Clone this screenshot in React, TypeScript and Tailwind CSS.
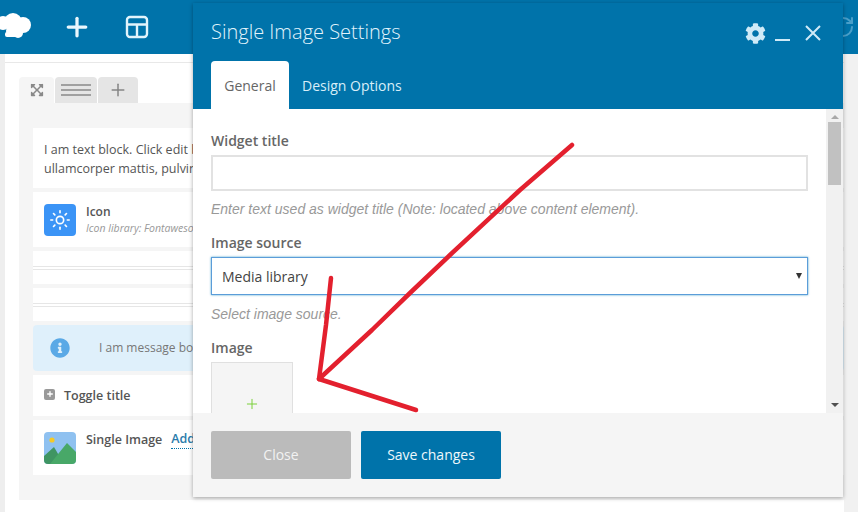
import { Plus, RefreshCw, Sun } from "lucide-react";
import { FaCog, FaExpandArrowsAlt, FaInfoCircle } from "react-icons/fa";

// Top bar logo and layout glyphs
function CloudLogo() {
  return (
    <svg width="34" height="28" viewBox="0 0 34 28" fill="white">
      <circle cx="5" cy="11" r="7" />
      <circle cx="15" cy="10" r="9" />
      <circle cx="25" cy="13" r="8" />
      <circle cx="14" cy="19" r="6" />
      <circle cx="20" cy="21" r="5" />
      <rect x="7" y="20" width="13" height="5" rx="2" />
    </svg>
  );
}

function LayoutGlyph() {
  return (
    <svg width="24" height="24" viewBox="0 0 24 24" fill="none" stroke="#e2f4fc" strokeWidth="2.4">
      <rect x="2" y="2" width="20" height="20" rx="3" />
      <path d="M2 9.5h20M12 9.5V22" />
    </svg>
  );
}

function ImageGlyph() {
  return (
    <svg width="32" height="32" viewBox="0 0 32 32" className="rounded">
      <rect width="32" height="32" fill="#8fc1f0" />
      <circle cx="8" cy="8" r="2.6" fill="#f5c927" />
      <path d="M0 24 10 15 20 32H0Z" fill="#3f9563" />
      <path d="M6 32 23 11 32 20V32Z" fill="#48a868" />
    </svg>
  );
}

function SpacerRow() {
  return (
    <div className="flex flex-col bg-white">
      <div className="h-[15px]" />
      <div className="h-[4px] border-y border-[#e6e6e6]" />
      <div className="h-[14px]" />
    </div>
  );
}

// Text in this column is cut where the dialog starts (x = 193)
function PageBehind() {
  return (
    <div className="flex-1 bg-white pt-2">
      <div className="h-px bg-[#e8e8e8]" />
      <div className="ml-[14px] mt-[14px] text-[#444]">
        <div className="flex h-[26px] gap-px">
          <div className="flex w-[35px] items-center justify-center rounded-t bg-[#f5f5f5] text-[#8a8a8a]">
            <FaExpandArrowsAlt size={14} />
          </div>
          <div className="flex w-[42px] flex-col items-center justify-center gap-[3px] rounded-t bg-[#e5e5e5]">
            <div className="h-[2px] w-[30px] bg-[#a0a0a0]" />
            <div className="h-[2px] w-[30px] bg-[#a0a0a0]" />
            <div className="h-[2px] w-[30px] bg-[#a0a0a0]" />
          </div>
          <div className="flex w-[40px] items-center justify-center rounded-t bg-[#e5e5e5] text-[#858585]">
            <Plus size={20} strokeWidth={1.8} />
          </div>
        </div>
        <div className="flex h-[397px] flex-col gap-1 bg-[#f5f5f5] pl-[14px] pt-[25px]">
          <div className="flex h-[60px] flex-col justify-center whitespace-nowrap bg-white pl-[11px] pt-[2px] text-[12.5px] leading-[19px] text-[#555]">
            <p className="w-[149px] overflow-hidden">I am text block. Click edit button to change this text.</p>
            <p className="w-[149px] overflow-hidden">ullamcorper mattis, pulvinar dapibus leo.</p>
          </div>
          <div className="flex h-[55px] items-center gap-[10px] bg-white pl-[11px]">
            <div className="flex h-8 w-8 items-center justify-center rounded bg-[#3b94f6] text-white">
              <Sun size={22} strokeWidth={1.8} />
            </div>
            <div className="w-[107px] overflow-hidden">
              <p className="text-[12px] font-semibold leading-4 text-[#555]">Icon</p>
              <p className="whitespace-nowrap text-[10.5px] italic leading-4 text-[#999]">Icon library: Fontawesome</p>
            </div>
          </div>
          <SpacerRow />
          <SpacerRow />
          <div className="flex h-[46px] items-center rounded bg-[#dff0fb] pl-[17px]">
            <FaInfoCircle size={20} className="text-[#5aa9e6]" />
            <span className="ml-[29px] w-[94px] overflow-hidden whitespace-nowrap text-[12px] text-[#777]">I am message box. Click edit</span>
          </div>
          <div className="flex h-[41px] items-center bg-white pl-[11px]">
            <div className="mb-[3px] flex h-[11px] w-[11px] items-center justify-center rounded-[2px] bg-[#999999] text-white">
              <Plus size={8} strokeWidth={4} />
            </div>
            <span className="ml-[9px] mt-[1px] text-[12.5px] font-semibold text-[#555]">Toggle title</span>
          </div>
          <div className="flex h-[55px] items-center gap-[10px] bg-white pl-[11px]">
            <ImageGlyph />
            <div className="mb-[15px] flex w-[107px] gap-[9px] overflow-hidden whitespace-nowrap text-[12.5px]">
              <span className="font-semibold text-[#555]">Single Image</span>
              <span className="border-b border-dotted border-[#0073aa] font-semibold leading-[15px] text-[#2a7bab]">Add image</span>
            </div>
          </div>
        </div>
      </div>
    </div>
  );
}

function SettingsModal() {
  return (
    <div className="absolute left-[193px] top-[3px] flex h-[494px] w-[650px] flex-col bg-[#f5f5f5] shadow-[0_1px_4px_rgba(0,0,0,0.35)] [font-family:'Open_Sans',sans-serif]">
      <div className="flex h-[106px] flex-col justify-between bg-[#0073aa] pl-[18px]">
        <div className="flex items-start justify-between pr-[22px] pt-[15px]">
          <h2 className="text-[20px] font-light leading-7 text-[#e2f4fc]">Single Image Settings</h2>
          <div className="mt-[2px] flex items-center">
            <FaCog size={21} className="mt-[3px] text-[#cfeaf7]" />
            <div className="ml-[9px] mt-[15px] h-[2px] w-[15px] bg-[#cfeaf7]" />
            <svg width="16" height="16" viewBox="0 0 16 16" stroke="#cfeaf7" strokeWidth="2" className="ml-[15px] mt-[1px]">
              <path d="M1 1l14 14M15 1 1 15" />
            </svg>
          </div>
        </div>
        <div className="flex items-stretch text-[14px]">
          <div className="flex h-[48px] w-[78px] items-center justify-center rounded-t bg-white text-[#666]">General</div>
          <div className="ml-[13px] flex items-center font-medium text-[#d8eef8]">Design Options</div>
        </div>
      </div>

      <div className="flex h-[304px] overflow-hidden bg-white">
        <div className="flex-1 overflow-hidden pl-[18px] pr-[18px] pt-[22px]">
          <label className="block text-[14px] font-semibold leading-5 text-[#666]">Widget title</label>
          <div className="mt-[4px] h-[36px] border-2 border-[#e2e2e2]" />
          <p className="mt-[10px] text-[14px] italic leading-4 text-[#999] [font-family:'Liberation_Sans',sans-serif]">
            Enter text used as widget title (Note: located above content element).
          </p>
          <label className="mt-[16px] block text-[14px] font-semibold leading-5 text-[#666]">Image source</label>
          <div className="mt-[4px] flex h-[38px] items-center justify-between border border-[#5b9dd9] pl-[10px] pr-[5px] text-[14px] text-[#444] shadow-[0_0_2px_rgba(30,140,190,0.8)]">
            <span>Media library</span>
            <div className="h-0 w-0 border-x-[3.5px] border-t-[6px] border-x-transparent border-t-[#333]" />
          </div>
          <p className="mt-[11px] text-[14px] italic leading-4 text-[#999] [font-family:'Liberation_Sans',sans-serif]">Select image source.</p>
          <label className="mt-[16px] block text-[14px] font-semibold leading-5 text-[#666]">Image</label>
          <div className="mt-[4px] flex h-[82px] w-[82px] items-center justify-center border border-[#e0e0e0] bg-[#f5f5f5] pt-[1px] text-[#7ad03a]">
            <Plus size={16} strokeWidth={1.5} />
          </div>
        </div>
        <div className="flex w-[17px] flex-col items-center bg-[#f1f1f1] pt-[6px]">
          <div className="h-0 w-0 border-x-[4px] border-b-[4px] border-x-transparent border-b-[#a8a8a8]" />
          <div className="mt-[3px] h-[63px] w-[13px] bg-[#c1c1c1]" />
          <div className="mt-auto mb-[6px] h-0 w-0 border-x-[4px] border-t-[4px] border-x-transparent border-t-[#505050]" />
        </div>
      </div>

      <div className="flex flex-1 items-start gap-[10px] pl-[18px] pt-[18px] text-[14px]">
        <div className="flex h-[48px] w-[140px] items-center justify-center rounded-[2px] bg-[#bbbbbb] pb-[2px] text-[#f2f2f2]">Close</div>
        <div className="flex h-[48px] w-[140px] items-center justify-center rounded-[2px] bg-[#0073aa] pb-[2px] text-[#eef8fc]">Save changes</div>
      </div>
    </div>
  );
}

export default function App() {
  return (
    <div className="relative flex h-[512px] w-[858px] flex-col overflow-hidden bg-white [font-family:'Open_Sans',sans-serif]">
      <header className="flex h-[54px] shrink-0 items-center bg-[#0073aa] pr-[3px]">
        <div className="-ml-[2px] mb-[3px]">
          <CloudLogo />
        </div>
        <Plus size={30} strokeWidth={2.6} className="ml-[30px] text-[#eaf7fd]" />
        <div className="ml-[33px]">
          <LayoutGlyph />
        </div>
        <RefreshCw size={24} className="ml-auto text-[#4a9fc9]" />
      </header>
      <div className="flex min-h-0 flex-1">
        <div className="w-[5px] shrink-0 bg-[#eeeeee]" />
        <PageBehind />
        <div className="w-[14px] shrink-0 bg-[#f1f1f1]" />
      </div>
      <SettingsModal />
      {/* hand drawn arrow over the dialog */}
      <svg className="pointer-events-none absolute left-0 top-0" width="858" height="512" fill="none" stroke="#e3202e" strokeWidth="4.5" strokeLinecap="round" strokeLinejoin="round">
        <path d="M572 145 520 190 450 255 410 293 372 330 319 379" />
        <path d="M331 278 326 325 319 379 416 410" />
      </svg>
    </div>
  );
}
